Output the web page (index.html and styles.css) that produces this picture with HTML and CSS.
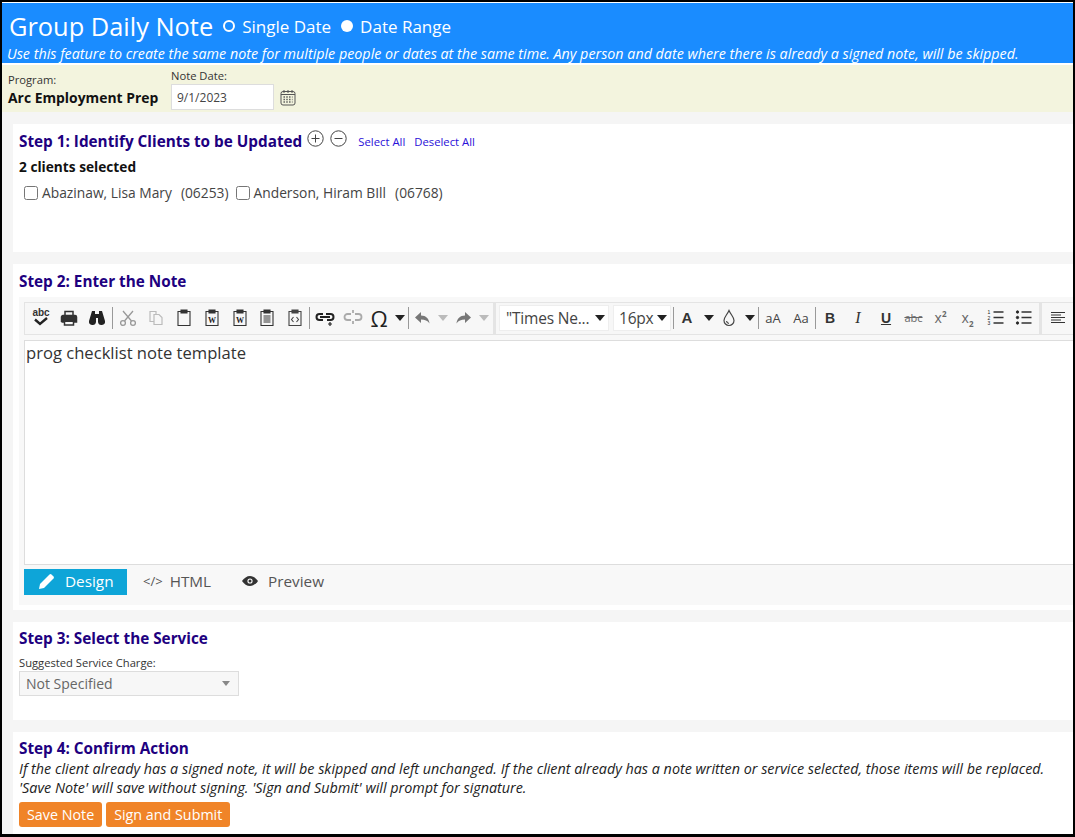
FILE: index.html
```html
<!DOCTYPE html>
<html lang="en">
<head>
  <meta charset="UTF-8">
  <meta name="viewport" content="width=device-width, initial-scale=1.0">
  <title>Group Daily Note</title>
  <link rel="stylesheet" href="styles.css">
</head>
<body>
  <div class="frame">
    <!-- page header -->
    <div class="page-header">
      <div class="title-row">
        <h1>Group Daily Note</h1>
        <label class="radio"><span class="dot dot-on"></span>Single Date</label>
        <label class="radio"><span class="dot"></span>Date Range</label>
      </div>
      <p class="header-note">Use this feature to create the same note for multiple people or dates at the same time. Any person and date where there is already a signed note, will be skipped.</p>
    </div>

    <!-- program bar -->
    <div class="program-bar">
      <div class="program">
        <span class="small-label">Program:</span>
        <strong>Arc Employment Prep</strong>
      </div>
      <div class="note-date">
        <span class="small-label">Note Date:</span>
        <div class="date-row">
          <input class="date-input" type="text" value="9/1/2023">
          <svg class="cal" width="16" height="17" viewBox="0 0 16 17" fill="none" stroke="#555">
            <rect x="1" y="2.5" width="14" height="13.5" rx="2"/>
            <path d="M1 5.5h14M4 1v3M8 1v3M12 1v3"/>
            <path d="M3.5 8h9M3.5 10.5h9M3.5 13h9" stroke-width="1.4" stroke-dasharray="1.4 1.4"/>
          </svg>
        </div>
      </div>
    </div>

    <!-- step 1 -->
    <section class="card step-one">
      <div class="step-head">
        <h2>Step 1: Identify Clients to be Updated</h2>
        <svg class="round-icon" width="17" height="17" viewBox="0 0 17 17" fill="none" stroke="#444"><circle cx="8.5" cy="8.5" r="7.7"/><path d="M8.5 4.5v8M4.500 8.500h8"/></svg>
        <svg class="round-icon" width="17" height="17" viewBox="0 0 17 17" fill="none" stroke="#444"><circle cx="8.5" cy="8.5" r="7.7"/><path d="M4.500 8.500h8"/></svg>
        <a class="mini-link first-link">Select All</a>
        <a class="mini-link">Deselect All</a>
      </div>
      <div class="selected-count">2 clients selected</div>
      <div class="client-list">
        <label class="client"><input type="checkbox">Abazinaw, Lisa Mary<span class="client-id">(06253)</span></label>
        <label class="client"><input type="checkbox">Anderson, Hiram BIll<span class="client-id">(06768)</span></label>
      </div>
    </section>

    <!-- step 2 -->
    <section class="card step-two">
      <h2>Step 2: Enter the Note</h2>
      <div class="editor">
        <div class="toolbar">
          <button class="tb"><svg width="20" height="20" viewBox="0 0 20 20"><text x="10" y="8" class="abc-mark">abc</text><path d="M4 11.500l5 4.500 7-6" fill="none" stroke="#222" stroke-width="2.400"/></svg></button>
          <button class="tb"><svg width="18" height="18" viewBox="0 0 18 18" fill="none" stroke="#333" stroke-width="1.500"><path d="M5 6V2.500h8V6"/><path d="M1.500 13V8a1.500 1.500 0 0 1 1.500-1.500h12A1.500 1.500 0 0 1 16.500 8v5H13.500M4.500 13H1.500" fill="#333"/><path d="M4.500 11h9v5h-9z"/></svg></button>
          <button class="tb"><svg width="18" height="18" viewBox="0 0 18 18" fill="#222"><path d="M4 2h3v3h4V2h3l3 10a3.500 3.500 0 1 1-7 1V9H8v4a3.500 3.500 0 1 1-7-1z"/></svg></button>
          <span class="sep"></span>
          <button class="tb"><svg width="18" height="18" viewBox="0 0 18 18" fill="none" stroke="#999" stroke-width="1.300"><circle cx="4" cy="14" r="2.400"/><circle cx="14" cy="14" r="2.400"/><path d="M5.500 12L14 2M12.500 12L4 2"/></svg></button>
          <button class="tb"><svg width="16" height="16" viewBox="0 0 16 16" fill="none" stroke="#bbb" stroke-width="1.200"><path d="M2 1.500h6v10H2z"/><path d="M6 4.500h5l3 3v7H6z" fill="#f7f7f7"/></svg></button>
          <button class="tb"><svg width="16" height="18" viewBox="0 0 16 18" fill="none" stroke="#333" stroke-width="1.100"><path d="M5 2.500H2v14h12v-14h-3"/><path d="M5 1h6v3H5z" fill="#333"/></svg></button>
          <button class="tb"><svg width="16" height="18" viewBox="0 0 16 18" fill="none" stroke="#333" stroke-width="1.100"><path d="M5 2.500H2v14h12v-14h-3"/><path d="M5 1h6v3H5z" fill="#333"/><text x="8" y="13.500" class="w-mark">W</text></svg></button>
          <button class="tb tb-narrow"><svg width="16" height="18" viewBox="0 0 16 18" fill="none" stroke="#333" stroke-width="1.100"><path d="M5 2.500H2v14h12v-14h-3"/><path d="M5 1h6v3H5z" fill="#333"/><text x="8" y="13.500" class="w-mark">W</text></svg></button>
          <button class="tb"><svg width="16" height="18" viewBox="0 0 16 18" fill="none" stroke="#333" stroke-width="1.100"><path d="M5 2.500H2v14h12v-14h-3"/><path d="M5 1h6v3H5z" fill="#333"/><path d="M4.500 7h7M4.500 9h7M4.500 11h7M4.500 13h7" stroke-width="1"/></svg></button>
          <button class="tb tb-narrow"><svg width="16" height="18" viewBox="0 0 16 18" fill="none" stroke="#444" stroke-width="1.100"><path d="M5 2.500H2v14h12v-14h-3"/><path d="M5 1h6v3H5z" fill="#444"/><path d="M6.500 8l-2 2.500 2 2.500M9.500 8l2 2.500-2 2.500"/></svg></button>
          <span class="sep"></span>
          <button class="tb"><svg width="20" height="18" viewBox="0 0 20 18" fill="none" stroke="#222" stroke-width="2"><path d="M8 5H4.500a3 3 0 0 0 0 6H8M11 5h4.500a3 3 0 0 1 0 6H12M5 8h10"/><path d="M15 13v4M13 15h4" stroke-width="1.200"/></svg></button>
          <button class="tb"><svg width="20" height="18" viewBox="0 0 20 18" fill="none" stroke="#aaa" stroke-width="1.800"><path d="M8 5H4.500a3 3 0 0 0 0 6H8M12 5h3.500a3 3 0 0 1 0 6H12M10 1v3M10 12v3"/></svg></button>
          <button class="tb tb-omega">Ω</button>
          <span class="caret-btn"><i class="caret"></i></span>
          <span class="sep sep-tight"></span>
          <button class="tb tb-hist"><svg width="17" height="14" viewBox="0 0 17 14" fill="#777"><path d="M7 1L1 6.500 7 12V8.500c4 0 6.500 1 8.500 4C15 7.500 12 4.500 7 4.500z"/></svg></button>
          <span class="caret-btn"><i class="caret caret-off"></i></span>
          <button class="tb tb-hist"><svg width="17" height="14" viewBox="0 0 17 14" fill="#777"><path d="M10 1l6 5.500L10 12V8.500c-4 0-6.500 1-8.500 4C2 7.500 5 4.500 10 4.500z"/></svg></button>
          <span class="caret-btn"><i class="caret caret-off"></i></span>
          <span class="group-sep"></span>
          <span class="pick pick-font">"Times Ne...<i class="caret"></i></span>
          <span class="pick pick-size">16px<i class="caret"></i></span>
          <span class="sep sep-pick"></span>
          <button class="tb tb-glyph tb-a">A</button>
          <span class="caret-btn"><i class="caret"></i></span>
          <button class="tb tb-hist"><svg width="14" height="18" viewBox="0 0 14 18" fill="none" stroke="#444" stroke-width="1.200"><path d="M7 1.500C5 6 2 8 2 11.500a5 5 0 0 0 10 0C12 8 9 6 7 1.500z"/><path d="M4.500 12a3 3 0 0 0 2.500 2.500"/></svg></button>
          <span class="caret-btn"><i class="caret"></i></span>
          <span class="sep sep-flush"></span>
          <button class="tb tb-text">aA</button>
          <button class="tb tb-text">Aa</button>
          <span class="sep sep-flush"></span>
          <button class="tb tb-glyph">B</button>
          <button class="tb tb-glyph tb-italic">I</button>
          <button class="tb tb-glyph tb-under">U</button>
          <button class="tb tb-strike">abc</button>
          <button class="tb tb-script"><span>x<sup>2</sup></span></button>
          <button class="tb tb-script"><span>x<sub>2</sub></span></button>
          <button class="tb"><svg width="17" height="17" viewBox="0 0 17 17" fill="none" stroke="#333"><path d="M6.500 3h10M6.500 8.500h10M6.500 14h10" stroke-width="1.300"/><text x="2" y="5" class="num-mark">1</text><text x="2" y="10.500" class="num-mark">2</text><text x="2" y="16" class="num-mark">3</text></svg></button>
          <button class="tb"><svg width="17" height="17" viewBox="0 0 17 17" fill="#222" stroke="#333"><circle cx="2.500" cy="3" r="1.200"/><circle cx="2.500" cy="8.500" r="1.200"/><circle cx="2.500" cy="14" r="1.200"/><path d="M6.500 3h10M6.500 8.500h10M6.500 14h10" stroke-width="1.300"/></svg></button>
          <span class="group-sep group-sep-last"></span>
          <button class="tb"><svg width="14" height="14" viewBox="0 0 14 14" stroke="#333" stroke-width="1.200"><path d="M0 1.500h14M0 4h10M0 6.500h14M0 9h10M0 11.500h14"/></svg></button>
        </div>
        <div class="note-body">prog checklist note template</div>
        <div class="editor-tabs">
          <span class="tab tab-on"><svg width="17" height="17" viewBox="0 0 17 17" fill="#fff"><path d="M1 16l1-5L11.500 1.500a1.500 1.500 0 0 1 2 0l2 2a1.500 1.500 0 0 1 0 2L6 15z"/></svg>Design</span>
          <span class="tab"><span class="code-mark">&lt;/&gt;</span>HTML</span>
          <span class="tab tab-preview"><svg width="16" height="10" viewBox="0 0 16 10" fill="#333"><path d="M0 5c2-3 5-5 8-5s6 2 8 5c-2 3-5 5-8 5S2 8 0 5z"/><circle cx="8" cy="5" r="2.600" fill="#fff"/><circle cx="8" cy="5" r="1.500"/></svg>Preview</span>
        </div>
      </div>
    </section>

    <!-- step 3 -->
    <section class="card step-three">
      <h2>Step 3: Select the Service</h2>
      <div class="small-label service-label">Suggested Service Charge:</div>
      <div class="service-select">Not Specified<i class="caret caret-grey"></i></div>
    </section>

    <!-- step 4 -->
    <section class="card step-four">
      <h2>Step 4: Confirm Action</h2>
      <p class="confirm-note">If the client already has a signed note, it will be skipped and left unchanged. If the client already has a note written or service selected, those items will be replaced.<br>'Save Note' will save without signing. 'Sign and Submit' will prompt for signature.</p>
      <div class="actions">
        <button class="action">Save Note</button>
        <button class="action">Sign and Submit</button>
      </div>
    </section>
  </div>
</body>
</html>
```

FILE: styles.css
```css
* {
  box-sizing: border-box;
}
html, body {
  margin: 0;
  height: 100%;
}
body {
  font-family: "Open Sans", "Noto Sans", Arial, sans-serif;
  background: #000;
  overflow: hidden;
}
.frame {
  height: 832px;
  margin: 2px 2px 0 2px;
  background: #f5f5f5;
  overflow: hidden;
}
h1, h2, p {
  margin: 0;
}
button {
  font-family: inherit;
  border: none;
  background: none;
  padding: 0;
}

/* header */
.page-header {
  background: #1a8cff;
  color: #fff;
  height: 63px;
  padding: 7px 0 0 5px;
  border-top: 1px solid #fff;
  border-bottom: 2px solid #fff;
}
.title-row {
  display: flex;
  align-items: center;
  height: 32px;
}
h1 {
  font-size: 25.4px;
  font-weight: 400;
  line-height: 32px;
  margin: 0 10px 0 2px;
}
.radio {
  display: flex;
  align-items: center;
  font-size: 17px;
  margin-right: 10px;
}
.dot {
  width: 12px;
  height: 12px;
  border-radius: 50%;
  background: #fff;
  margin-right: 7px;
}
.dot-on {
  background: #1a8cff;
  border: 2px solid #fff;
}
.header-note {
  font-size: 14.3px;
  font-style: italic;
  line-height: 18px;
  margin-top: 3px;
  white-space: nowrap;
}

/* program bar */
.program-bar {
  display: flex;
  background: #f3f4de;
  height: 47px;
  padding: 4px 0 0 6px;
}
.small-label {
  display: block;
  font-size: 11.2px;
  line-height: 14px;
  color: #333;
}
.program {
  padding-top: 4px;
  width: 163px;
}
.program strong {
  font-size: 13.9px;
  line-height: 18px;
  color: #111;
  display: block;
  margin-top: 2px;
}
.date-row {
  display: flex;
  align-items: center;
  margin-top: 1px;
}
.date-input {
  width: 103px;
  height: 26px;
  border: 1px solid #ddd;
  background: #fff;
  font: 12px "Open Sans", sans-serif;
  color: #444;
  padding: 0 5px;
}
.cal {
  margin-left: 6px;
}

/* cards */
.card {
  background: #fff;
  margin: 12px 0 0 11px;
  padding: 0 6px;
}
h2 {
  font-size: 15.3px;
  font-weight: 700;
  line-height: 20px;
  color: #20007f;
}
.step-one {
  height: 128px;
  padding-top: 7px;
}
.step-head {
  display: flex;
  align-items: center;
}
.round-icon {
  margin: -5px 0 0 5px;
}
.round-icon + .round-icon {
  margin-left: 6px;
}
.mini-link {
  font-size: 11.3px;
  color: #2a10d8;
  margin-left: 9px;
}
.first-link {
  margin-left: 11px;
}
.selected-count {
  font-size: 13.7px;
  font-weight: 700;
  line-height: 18px;
  margin-top: 7px;
  color: #111;
}
.client-list {
  display: flex;
  margin-top: 7px;
  padding-left: 5px;
}
.client {
  display: flex;
  align-items: center;
  font-size: 13.8px;
  color: #444;
  margin-right: 7px;
}
.client input {
  width: 14px;
  height: 14px;
  margin: 0 4px 0 0;
}
.client-id {
  margin-left: 9px;
}

/* editor */
.step-two {
  height: 346px;
  padding-top: 7px;
}
.editor {
  background: #f8f8f8;
  margin-top: 6px;
  margin-right: -6px;
  height: 308px;
  padding: 5px 0 0 5px;
}
.toolbar {
  display: flex;
  align-items: center;
  height: 33px;
  padding: 0 0 2px 2px;
  background: #f7f7f7;
  border: 1px solid #e4e4e4;
  border-right: none;
  overflow: hidden;
}
.tb {
  flex: none;
  width: 28px;
  height: 26px;
  display: flex;
  align-items: center;
  justify-content: center;
  color: #333;
}
.tb-narrow {
  width: 27px;
}
.tb-omega {
  width: 24px;
  font-size: 22px;
  font-family: "Open Sans", sans-serif;
  color: #222;
}
.tb-hist {
  width: 24px;
}
.tb-glyph {
  font-family: "Liberation Sans", Arial, sans-serif;
  font-size: 14px;
  font-weight: 700;
}
.tb-a {
  width: 26px;
  font-size: 15px;
}
.tb-italic {
  font-family: "Liberation Serif", serif;
  font-style: italic;
  font-weight: 400;
  font-size: 16px;
}
.tb-under {
  text-decoration: underline;
}
.tb-text {
  font-size: 13px;
  color: #444;
}
.tb-strike {
  width: 27px;
  font-size: 11px;
  color: #666;
  text-decoration: line-through;
}
.tb-script {
  width: 27px;
  font-size: 14px;
  color: #666;
}
.tb-script sup, .tb-script sub {
  font-size: 8px;
  font-weight: 700;
  line-height: 0;
}
.sep {
  flex: none;
  width: 1px;
  height: 22px;
  background: #999;
  margin: 0 1px;
}
.sep-tight {
  margin: 0 1px 0 0;
}
.sep-pick {
  margin: 0 0 0 2px;
}
.sep-flush {
  margin: 0;
}
.caret-btn {
  flex: none;
  width: 17px;
  display: flex;
  justify-content: center;
}
.caret {
  display: inline-block;
  width: 0;
  height: 0;
  border-left: 5px solid transparent;
  border-right: 5px solid transparent;
  border-top: 6px solid #222;
}
.caret-off {
  border-top-color: #bbb;
}
.group-sep {
  flex: none;
  width: 3px;
  height: 32px;
  background: #e4e4e4;
  margin: 0 3px 0 1px;
}
.group-sep-last {
  margin: 0 2px 0 2px;
}
.abc-mark {
  font: 700 10px "Liberation Sans", sans-serif;
  fill: #333;
  text-anchor: middle;
}
.w-mark {
  font: 700 8px "Liberation Serif", serif;
  fill: #222;
  stroke: none;
  text-anchor: middle;
}
.num-mark {
  font: 5px "Liberation Sans", sans-serif;
  fill: #222;
  stroke: none;
  text-anchor: middle;
}
.pick {
  flex: none;
  display: flex;
  align-items: center;
  justify-content: space-between;
  height: 26px;
  background: #fff;
  border: 1px solid #eee;
  font-size: 15.5px;
  color: #444;
  padding: 0 3px 0 6px;
  margin-right: 4px;
  letter-spacing: -0.2px;
}
.pick-font {
  width: 110px;
}
.pick-size {
  width: 58px;
  margin-right: 0;
  padding-left: 5px;
}
.note-body {
  height: 225px;
  margin-top: 5px;
  background: #fff;
  border: 1px solid #ddd;
  border-right: none;
  padding: 1px;
  font-size: 16.6px;
  line-height: 22px;
  color: #333;
}
.editor-tabs {
  display: flex;
  margin-top: 4px;
  height: 26px;
}
.tab {
  display: flex;
  align-items: center;
  font-size: 15.3px;
  color: #555;
  width: 103px;
  padding-bottom: 2px;
}
.tab-on {
  background: #0ea5d8;
  color: #fff;
  padding-left: 14px;
  gap: 10px;
}
.code-mark {
  font-size: 13px;
  margin: 0 7px 0 16px;
}
.tab-preview {
  gap: 10px;
  padding-left: 12px;
}

/* service */
.step-three {
  height: 98px;
  padding-top: 6px;
}
.service-label {
  margin-top: 8px;
}
.service-select {
  display: flex;
  align-items: center;
  justify-content: space-between;
  width: 220px;
  height: 25px;
  margin-top: 1px;
  background: #f7f7f7;
  border: 1px solid #ddd;
  font-size: 14px;
  color: #666;
  padding: 0 8px 0 6px;
}
.caret-grey {
  border-left-width: 4px;
  border-right-width: 4px;
  border-top: 5px solid #888;
}

/* confirm */
.step-four {
  height: 110px;
  padding-top: 6px;
}
.confirm-note {
  font-size: 14.35px;
  font-style: italic;
  line-height: 19px;
  color: #222;
  white-space: nowrap;
  margin-top: 1px;
}
.actions {
  display: flex;
  gap: 4px;
  margin-top: 5px;
}
.action {
  background: #f08428;
  color: #fff;
  font-size: 14.3px;
  height: 25px;
  padding: 0 8px;
  border-radius: 3px;
}
```
